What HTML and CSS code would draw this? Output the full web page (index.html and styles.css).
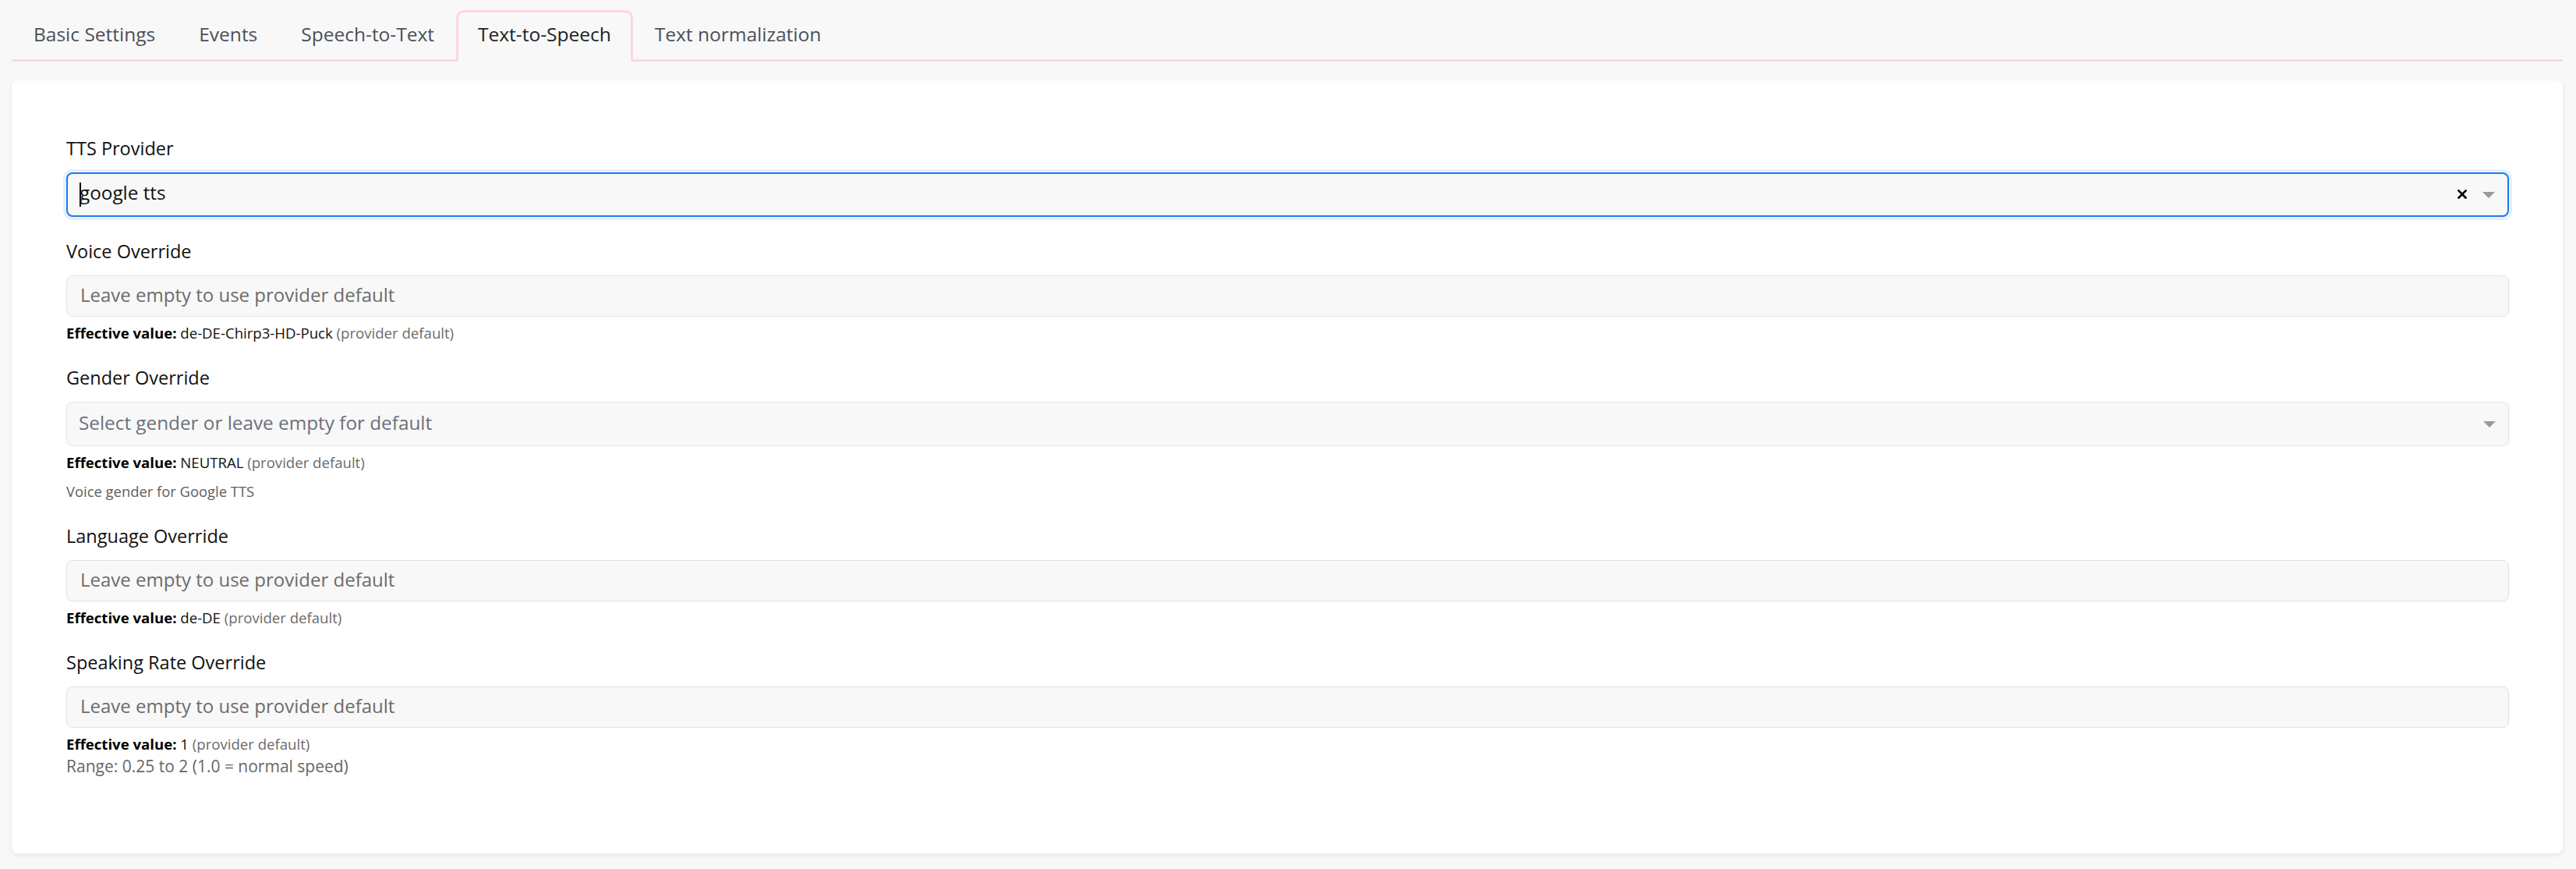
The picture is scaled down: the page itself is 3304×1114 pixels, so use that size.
FILE: index.html
```html
<!DOCTYPE html>
<html lang="en">
<head>
<meta charset="UTF-8">
<title>Text-to-Speech Settings</title>
<link rel="stylesheet" href="styles.css">
</head>
<body>

<div class="page">
  <div class="tabs">
    <div class="tab">Basic Settings</div>
    <div class="tab">Events</div>
    <div class="tab">Speech-to-Text</div>
    <div class="tab tab-active">Text-to-Speech</div>
    <div class="tab">Text normalization</div>
  </div>

  <div class="card">
    <div class="field">
      <label class="field-label">TTS Provider</label>
      <div class="select select-focus">
        <div class="select-value"><span class="caret"></span>google tts</div>
        <svg class="select-clear" width="12" height="12" viewBox="0 0 12 12">
          <path d="M1.5 1.5 L10.5 10.5 M10.5 1.5 L1.5 10.5" stroke="#000" stroke-width="2.6" stroke-linecap="square"/>
        </svg>
        <span class="select-arrow"></span>
      </div>
    </div>

    <div class="field">
      <label class="field-label">Voice Override</label>
      <input class="text-input" type="text" placeholder="Leave empty to use provider default">
      <p class="effective"><b>Effective value:</b> de-DE-Chirp3-HD-Puck <span class="muted">(provider default)</span></p>
    </div>

    <div class="field">
      <label class="field-label">Gender Override</label>
      <div class="select">
        <div class="select-value placeholder">Select gender or leave empty for default</div>
        <span class="select-arrow"></span>
      </div>
      <p class="effective"><b>Effective value:</b> NEUTRAL <span class="muted">(provider default)</span></p>
      <p class="help">Voice gender for Google TTS</p>
    </div>

    <div class="field">
      <label class="field-label">Language Override</label>
      <input class="text-input" type="text" placeholder="Leave empty to use provider default">
      <p class="effective"><b>Effective value:</b> de-DE <span class="muted">(provider default)</span></p>
    </div>

    <div class="field">
      <label class="field-label">Speaking Rate Override</label>
      <input class="text-input" type="text" placeholder="Leave empty to use provider default">
      <p class="effective"><b>Effective value:</b> 1 <span class="muted">(provider default)</span></p>
      <p class="range">Range: 0.25 to 2 (1.0 = normal speed)</p>
    </div>
  </div>
</div>

</body>
</html>
```

FILE: styles.css
```css
body {
  margin: 0;
  background-color: #f8f8f8;
  font-family: "Open Sans", sans-serif;
  color: #1a1a1a;
}
.page {
  padding: 13px 17px 20px 15px;
}

/* abas */
.tabs {
  display: flex;
  border-bottom: 3px solid #fdd5ec;
}
.tab {
  font-size: 24.5px;
  line-height: 36px;
  color: #4b5058;
  padding: 10px 25px 17px 25px;
  margin-bottom: -3px;
  border: 3px solid transparent;
  border-bottom: none;
  border-radius: 10px 10px 0 0;
}
.tab-active {
  color: #202226;
  background-color: #f8f8f8;
  border-color: #fdd5ec;
}

/* cartao */
.card {
  margin-top: 24px;
  background-color: #fff;
  border-radius: 8px;
  box-shadow: 0px 2px 6px 0px rgba(0,0,0,0.08);
  padding: 69px 69px 70px 70px;
}
.field {
  margin-bottom: 26px;
}
.field-label {
  display: block;
  font-size: 23.5px;
  line-height: 36px;
  color: #111;
  margin-bottom: 13px;
}

.text-input {
  display: block;
  box-sizing: border-box;
  width: 100%;
  height: 53px;
  margin: 0;
  padding: 0 17px 4px 17px;
  font-family: inherit;
  font-size: 24px;
  color: #111;
  background-color: #f8f8f8;
  border: 1px solid #e2e2e2;
  border-radius: 8px;
  outline: none;
}
.text-input::placeholder {
  color: #6c6c6c;
}

.select {
  display: flex;
  align-items: center;
  box-sizing: border-box;
  height: 57px;
  padding: 0 16px 4px 15px;
  background-color: #f8f8f8;
  border: 1px solid #e2e2e2;
  border-radius: 8px;
  font-size: 24.3px;
  line-height: 32px;
}
.select-focus {
  border: 2px solid #1b7bee;
  box-shadow: 0 0 0 4px #e6f0fd;
}
.select-value {
  flex: 1;
  color: #111;
}
.select-value.placeholder {
  color: #6b717c;
}
.caret {
  display: inline-block;
  width: 2px;
  height: 31px;
  margin-right: -2px;
  vertical-align: middle;
  background-color: #000;
}
.select-clear {
  margin-right: 20px;
  margin-top: 2px;
}
.select-arrow {
  width: 0;
  height: 0;
  margin-top: 4px;
  border-left: 8px solid transparent;
  border-right: 8px solid transparent;
  border-top: 8px solid #9a9a9a;
}

.effective {
  margin: 7px 0 0 0;
  font-size: 18.6px;
  line-height: 27px;
  color: #111;
}
.effective b {
  color: #000;
}
.muted {
  color: #6b6b6b;
}
.help {
  margin: 10px 0 0 0;
  font-size: 18.4px;
  line-height: 27px;
  color: #5e5e5e;
}
.range {
  margin: 0;
  font-size: 21px;
  line-height: 31px;
  color: #666;
}
```
